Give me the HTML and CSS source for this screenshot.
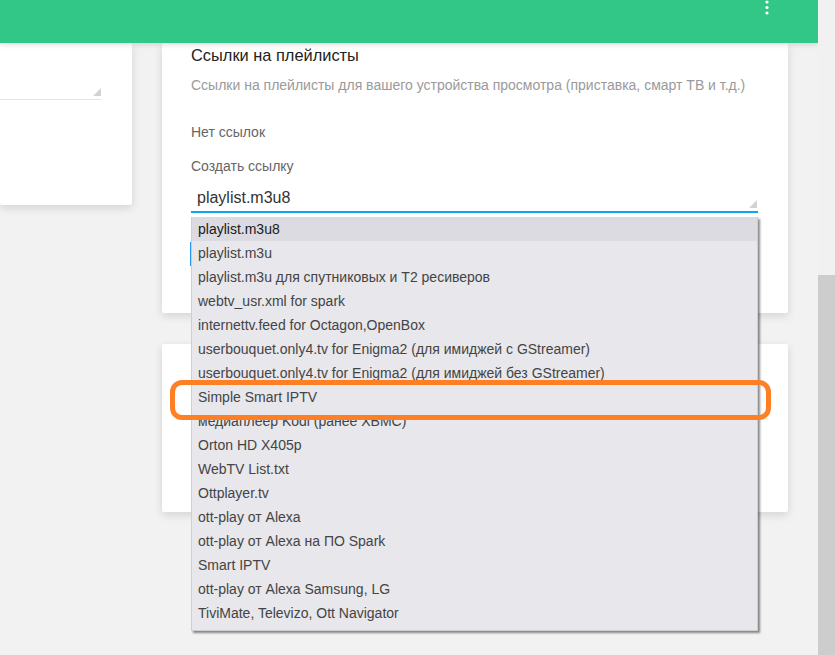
FILE: index.html
```html
<!DOCTYPE html>
<html lang="ru">
<head>
<meta charset="utf-8">
<title>Ссылки на плейлисты</title>
<link rel="stylesheet" href="styles.css">
</head>
<body>
<div class="app">
  <div class="main">
    <header class="topbar">
      <svg class="menu-dots" width="6" height="16" viewBox="0 0 6 16" aria-hidden="true">
        <circle cx="3" cy="2" r="1.6" fill="#fff"/>
        <circle cx="3" cy="7.5" r="1.6" fill="#fff"/>
        <circle cx="3" cy="13" r="1.6" fill="#fff"/>
      </svg>
    </header>
    <div class="content">
      <aside class="col-left">
        <div class="card card-side">
          <div class="side-field"><span class="resize"></span></div>
        </div>
      </aside>
      <section class="col-right">
        <div class="card card-links">
          <h2 class="card-title">Ссылки на плейлисты</h2>
          <p class="card-sub">Ссылки на плейлисты для вашего устройства просмотра (приставка, смарт ТВ и т.д.)</p>
          <p class="muted no-links">Нет ссылок</p>
          <p class="muted create">Создать ссылку</p>
          <div class="select">
            <span class="select-value">playlist.m3u8</span>
            <span class="resize resize-select"></span>
            <ul class="dropdown">
              <li class="active">playlist.m3u8</li>
              <li>playlist.m3u</li>
              <li>playlist.m3u для спутниковых и Т2 ресиверов</li>
              <li>webtv_usr.xml for spark</li>
              <li>internettv.feed for Octagon,OpenBox</li>
              <li>userbouquet.only4.tv for Enigma2 (для имиджей с GStreamer)</li>
              <li>userbouquet.only4.tv for Enigma2 (для имиджей без GStreamer)</li>
              <li>Simple Smart IPTV</li>
              <li>медиаплеер Kodi (ранее XBMC)</li>
              <li>Orton HD X405p</li>
              <li>WebTV List.txt</li>
              <li>Ottplayer.tv</li>
              <li>ott-play от Alexa</li>
              <li>ott-play от Alexa на ПО Spark</li>
              <li>Smart IPTV</li>
              <li>ott-play от Alexa Samsung, LG</li>
              <li>TiviMate, Televizo, Ott Navigator</li>
            </ul>
          </div>
          <div class="hidden-btn"></div>
        </div>
        <div class="card card-second"></div>
      </section>
    </div>
  </div>
  <div class="scrollbar"><div class="thumb"></div></div>
  <div class="highlight"></div>
</div>
</body>
</html>
```
FILE: styles.css
```css
* { box-sizing: border-box; }
html, body { margin: 0; padding: 0; }
body {
  font-family: "Liberation Sans", Arial, sans-serif;
  background: #f2f2f2;
  width: 835px;
  height: 655px;
  overflow: hidden;
}
.app {
  position: relative;
  display: flex;
  width: 835px;
  height: 655px;
}
.main {
  width: 818px;
  height: 655px;
  overflow: hidden;
  background: #f2f2f2;
}
.topbar {
  position: relative;
  z-index: 3;
  height: 43px;
  background: #33c787;
  box-shadow: 0 2px 5px rgba(0,0,0,0.12);
  display: flex;
  justify-content: flex-end;
  align-items: flex-start;
  padding-right: 48px;
}
.menu-dots { display: block; margin-top: 0; }
.content {
  display: flex;
  gap: 30px;
  align-items: flex-start;
}
.col-left { width: 132px; flex: none; }
.col-right {
  width: 626px;
  flex: none;
  display: flex;
  flex-direction: column;
  gap: 31px;
}
.card {
  background: #fff;
  border-radius: 2px;
  box-shadow: 0 3px 10px rgba(0,0,0,0.13);
}
.card-side {
  height: 162px;
  padding-top: 45px;
}
.side-field {
  position: relative;
  width: 101px;
  height: 12px;
  border-bottom: 1px solid #e4e4e4;
}
.resize {
  position: absolute;
  right: 0;
  bottom: 3px;
  width: 0;
  height: 0;
  border-left: 8px solid transparent;
  border-bottom: 8px solid #d3d3d3;
}
.card-links {
  height: 270px;
  padding: 2px 30px 0 29px;
  position: relative;
}
.card-title {
  margin: 0;
  font-size: 16.4px;
  line-height: 20px;
  font-weight: normal;
  color: #222;
}
.card-sub {
  margin: 10px 0 0;
  font-size: 14px;
  line-height: 20px;
  color: #9a9a9a;
  white-space: nowrap;
}
.muted {
  margin: 0;
  font-size: 14px;
  line-height: 20px;
  color: #666;
}
.no-links { margin-top: 27px; }
.create { margin-top: 14px; }
.select {
  position: relative;
  z-index: 4;
  height: 37px;
  padding: 12px 0 3px 6px;
  border-bottom: 2px solid #0ea7ef;
}
.select-value {
  display: block;
  font-size: 16px;
  line-height: 20px;
  color: #333;
}
.resize-select { right: 1px; bottom: 3px; }
.dropdown {
  position: absolute;
  top: 41px;
  left: 0;
  width: 567px;
  margin: 0;
  padding: 0 0 5px;
  list-style: none;
  background: #e8e7ec;
  border: 1px solid #cfcfd3;
  border-top: none;
  box-shadow: 2px 2px 2px rgba(0,0,0,0.45);
}
.dropdown li {
  height: 24px;
  line-height: 25px;
  padding-left: 6px;
  font-size: 14px;
  color: #444;
  white-space: nowrap;
}
.dropdown li.active {
  background: #dcdbe1;
  color: #1a1a1a;
}
.hidden-btn {
  margin-top: 29px;
  margin-left: -1px;
  width: 60px;
  height: 24px;
  border-left: 1px solid #2196f3;
}
.card-second { height: 168px; }
.scrollbar {
  width: 17px;
  height: 655px;
  background: #f1f1f1;
  padding-top: 275px;
}
.thumb {
  width: 17px;
  height: 380px;
  background: #cdcdcd;
}
.highlight {
  position: absolute;
  left: 170px;
  top: 380px;
  width: 601px;
  height: 40px;
  border: 5px solid #ff7f24;
  border-radius: 12px;
  z-index: 10;
}
```
